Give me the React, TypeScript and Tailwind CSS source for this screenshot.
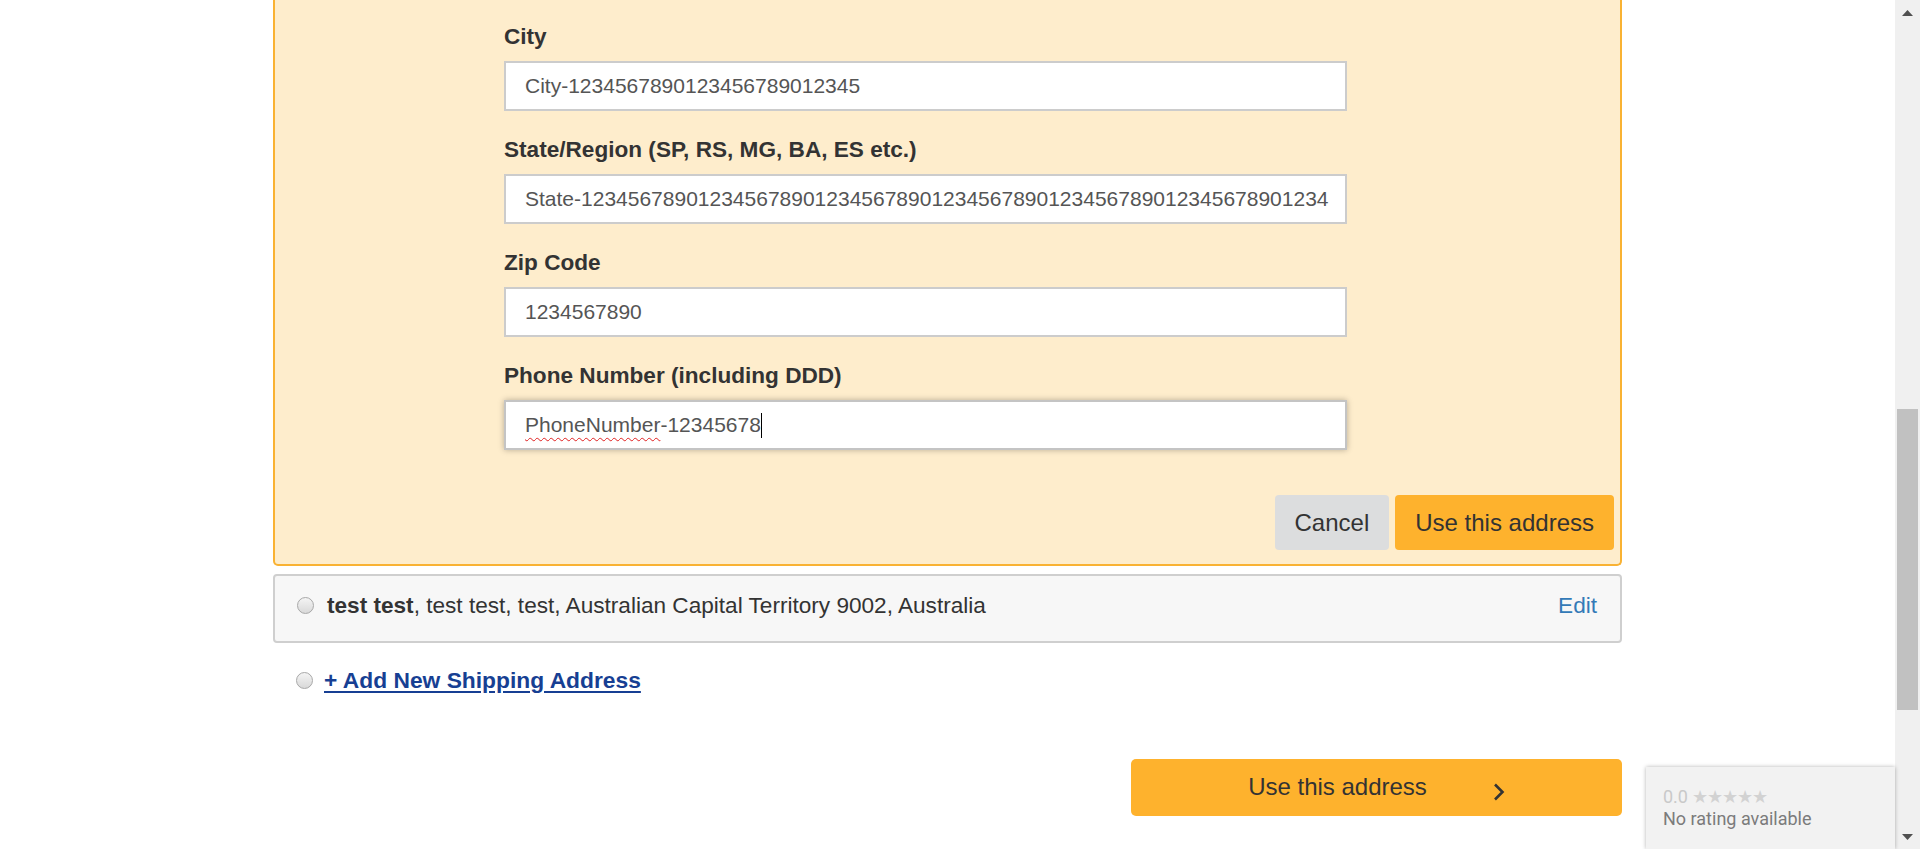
const fields = [
  { label: 'City', value: 'City-1234567890123456789012345' },
  {
    label: 'State/Region (SP, RS, MG, BA, ES etc.)',
    value: 'State-1234567890123456789012345678901234567890123456789012345678901234',
  },
  { label: 'Zip Code', value: '1234567890' },
]

const Radio = () => (
  <span className="inline-block w-[17px] h-[17px] rounded-full border border-[#a8a8a8] bg-gradient-to-b from-[#f4f4f4] to-[#d9d9d9] shrink-0" />
)

const App = () => {
  return (
    <div className="flex h-[849px] overflow-hidden bg-white font-['Liberation_Sans',Arial,sans-serif] text-[#333]">
      <div className="relative flex-1">
        <div className="mx-auto w-[1349px]">
          {/* edit address form */}
          <div className="bg-[#feedcc] border-2 border-t-0 border-[#f9b233] rounded-b-[5px] pt-[21px] pb-[14px]">
            <div className="pl-[229px]">
              {fields.map((field) => (
                <div key={field.label} className="mb-[23px]">
                  <div className="text-[22.6px] leading-[32px] font-bold mb-[8px]">{field.label}</div>
                  <div className="w-[843px] h-[50px] bg-white border-2 border-[#cccccc] pl-[19px] pr-[8px] flex items-center overflow-hidden whitespace-nowrap text-[21px] text-[#555]">
                    {field.value}
                  </div>
                </div>
              ))}
              <div>
                <div className="text-[22.6px] leading-[32px] font-bold mb-[8px]">Phone Number (including DDD)</div>
                <div className="w-[843px] h-[50px] bg-white border-2 border-[#c4c4c4] shadow-[0_0_6px_rgba(0,0,0,0.28)] pl-[19px] flex items-center whitespace-nowrap text-[21px] text-[#555]">
                  <span className="underline decoration-wavy decoration-[#e02020] decoration-1 underline-offset-[5px]">PhoneNumber</span>
                  <span>-12345678</span>
                  <span className="inline-block w-px h-[25px] bg-black" />
                </div>
              </div>
            </div>
            <div className="flex justify-end gap-[6px] pr-[6px] mt-[45px]">
              <button className="h-[55px] px-[20px] rounded-[4px] bg-[#dcddde] text-[24px] text-[#333]">Cancel</button>
              <button className="h-[55px] px-[20px] rounded-[4px] bg-[#feb22d] text-[24px] text-[#333]">Use this address</button>
            </div>
          </div>

          {/* saved address */}
          <div className="mt-[8px] h-[69px] bg-[#f7f7f7] border-2 border-[#cfcfcf] rounded-[4px] pl-[22px] pr-[23px] pb-[6px] flex items-center text-[22.6px]">
            <Radio />
            <div className="ml-[13px] flex-1 whitespace-nowrap">
              <span className="font-bold">test test</span>, test test, test, Australian Capital Territory 9002, Australia
            </div>
            <a href="#" className="text-[#337ab7]">Edit</a>
          </div>

          <div className="mt-[23px] h-[28px] pl-[23px] flex items-center">
            <Radio />
            <a href="#" className="ml-[11px] text-[22.8px] font-bold text-[#173f93] underline underline-offset-[3px]">
              + Add New Shipping Address
            </a>
          </div>

          <div className="mt-[65px] flex justify-end">
            <button className="w-[491px] h-[57px] rounded-[5px] bg-[#feb22d] flex items-center justify-center gap-[66px] text-[24px] text-[#333]">
              <span className="-mt-[2px]">Use this address</span>
              <svg width="12" height="18" viewBox="0 0 12 18" className="mt-[9px]">
                <path d="M2 1.5 L9.5 9 L2 16.5" fill="none" stroke="#333" strokeWidth="2.6" />
              </svg>
            </button>
          </div>
        </div>

        {/* rating badge */}
        <div className="absolute right-0 bottom-0 w-[249px] h-[82px] bg-[#f2f2f2] shadow-[0_0_4px_rgba(0,0,0,0.3)] pl-[17px] pt-[19px] font-['Roboto',Arial,sans-serif] text-[18px] leading-[22px]">
          <div className="text-[#c9c9c9]">
            0.0 <span className="tracking-[-1px] text-[#d2d2d2]">★★★★★</span>
          </div>
          <div className="text-[#7b7b7b]">No rating available</div>
        </div>
      </div>

      {/* scrollbar */}
      <div className="w-[25px] bg-[#f0f0f0] flex flex-col items-center">
        <div className="h-[25px] flex items-center justify-center">
          <svg width="11" height="6" viewBox="0 0 11 6">
            <path d="M0 6 L5.5 0 L11 6 Z" fill="#505050" />
          </svg>
        </div>
        <div className="h-[384px]" />
        <div className="w-[21px] h-[301px] bg-[#c1c1c1]" />
        <div className="flex-1" />
        <div className="h-[25px] flex items-center justify-center">
          <svg width="11" height="6" viewBox="0 0 11 6">
            <path d="M0 0 L11 0 L5.5 6 Z" fill="#505050" />
          </svg>
        </div>
      </div>
    </div>
  )
}

export default App
